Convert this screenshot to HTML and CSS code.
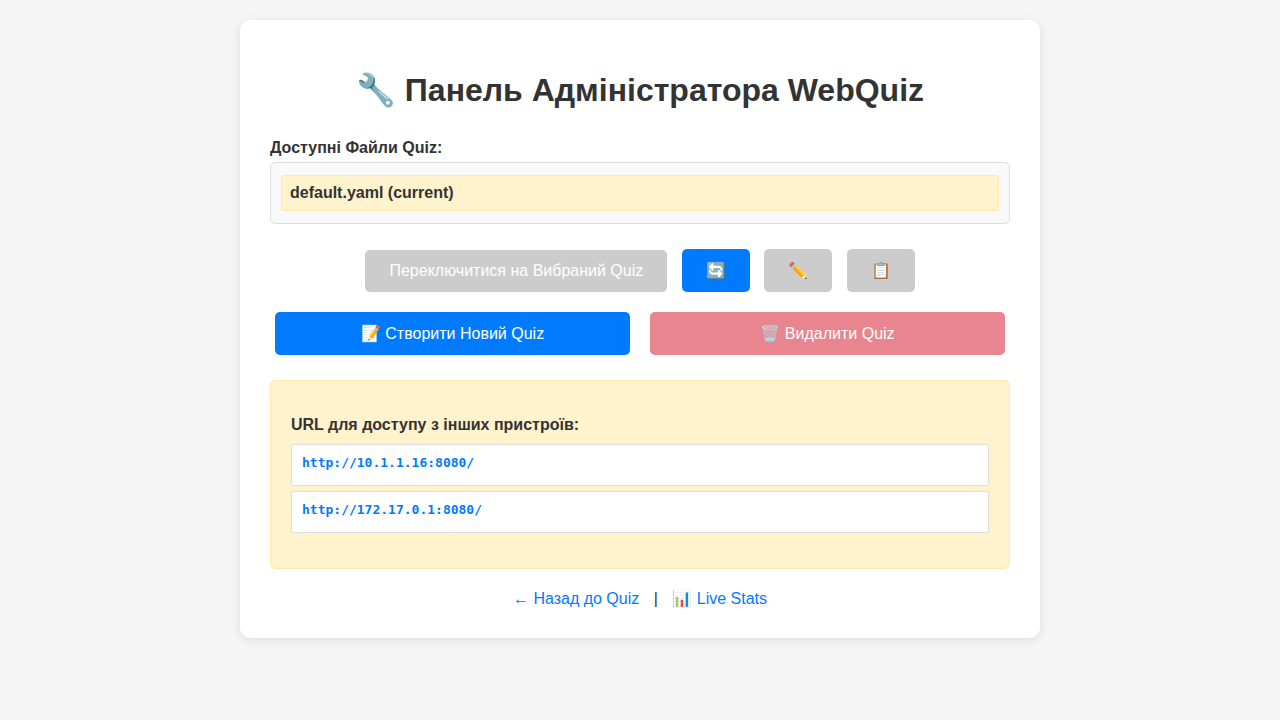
FILE: index.html
```html
<!DOCTYPE html>
<html lang="uk">
<head>
<meta charset="UTF-8">
<title>WebQuiz</title>
<link rel="stylesheet" href="styles.css">
</head>
<body>
<div class="container">
  <h1>🔧 Панель Адміністратора WebQuiz</h1>
  <div class="files-label">Доступні Файли Quiz:</div>
  <div class="file-list">
    <div class="file-item current">default.yaml (current)</div>
  </div>
  <div class="actions">
    <button class="btn switch" disabled>Переключитися на Вибраний Quiz</button>
    <button class="btn">🔄</button>
    <button class="btn" disabled>✏️</button>
    <button class="btn" disabled>📋</button>
  </div>
  <div class="manage">
    <button class="btn">📝 Створити Новий Quiz</button>
    <button class="btn danger">🗑️ Видалити Quiz</button>
  </div>
  <div class="access">
    <div class="access-title">URL для доступу з інших пристроїв:</div>
    <div class="url">http://10.1.1.16:8080/</div>
    <div class="url">http://172.17.0.1:8080/</div>
  </div>
  <div class="links">
    <a href="#">← Назад до Quiz</a>
    <span class="separator">|</span>
    <a href="#">📊 Live Stats</a>
  </div>
</div>
</body>
</html>
```

FILE: styles.css
```css
* {
  box-sizing: border-box;
}

body {
  margin: 0;
  padding: 20px;
  background: #f5f5f5;
  color: #333;
  font: 16px/18px "Liberation Sans", Arial, sans-serif;
}

.container {
  width: 800px;
  height: 618px;
  margin: 0 auto;
  padding: 51px 30px 0;
  background: #fff;
  border-radius: 10px;
  box-shadow: 0 2px 10px rgba(0, 0, 0, 0.1);
}

h1 {
  margin: 0 0 30px;
  font-size: 32px;
  line-height: 38px;
  text-align: center;
}

.files-label {
  margin-bottom: 5px;
  font-weight: bold;
}

.file-list {
  height: 62px;
  padding: 12px 10px;
  background: #f9f9f9;
  border: 1px solid #ddd;
  border-radius: 5px;
}

.file-item {
  height: 36px;
  padding: 8px;
  border: 1px solid #ffeaa7;
  border-radius: 3px;
  background: #fff3cd;
  font-weight: bold;
}

.actions {
  display: flex;
  justify-content: center;
  align-items: flex-end;
  gap: 14.45px;
  margin-top: 25px;
}

.btn {
  height: 43px;
  padding: 12px 24px;
  border: 0;
  border-radius: 5px;
  background: #007bff;
  color: #fff;
  font: 16px/normal "Liberation Sans", Arial, sans-serif;
}

.btn:disabled {
  background: #ccc;
}

.btn.switch {
  height: 42px;
}

.manage {
  display: flex;
  gap: 20px;
  margin: 20px 5px 25px;
}

.manage .btn {
  flex: 1;
}

.btn.danger {
  background: #dc3545;
  opacity: 0.6;
}

.access {
  height: 189px;
  padding: 35px 20px 0;
  border: 1px solid #ffeaa7;
  border-radius: 5px;
  background: #fff3cd;
}

.access-title {
  margin-bottom: 10px;
  font-weight: bold;
}

.url {
  height: 42px;
  margin-bottom: 5px;
  padding: 10px;
  background: #fff;
  border: 1px solid #ddd;
  border-radius: 3px;
  color: #007bff;
  font: bold 13px/15px "DejaVu Sans Mono", monospace;
}

.links {
  margin-top: 20px;
  line-height: 19px;
  text-align: center;
}

.separator {
  margin: 0 10px;
}

.links a {
  color: #007bff;
  text-decoration: none;
}
```
